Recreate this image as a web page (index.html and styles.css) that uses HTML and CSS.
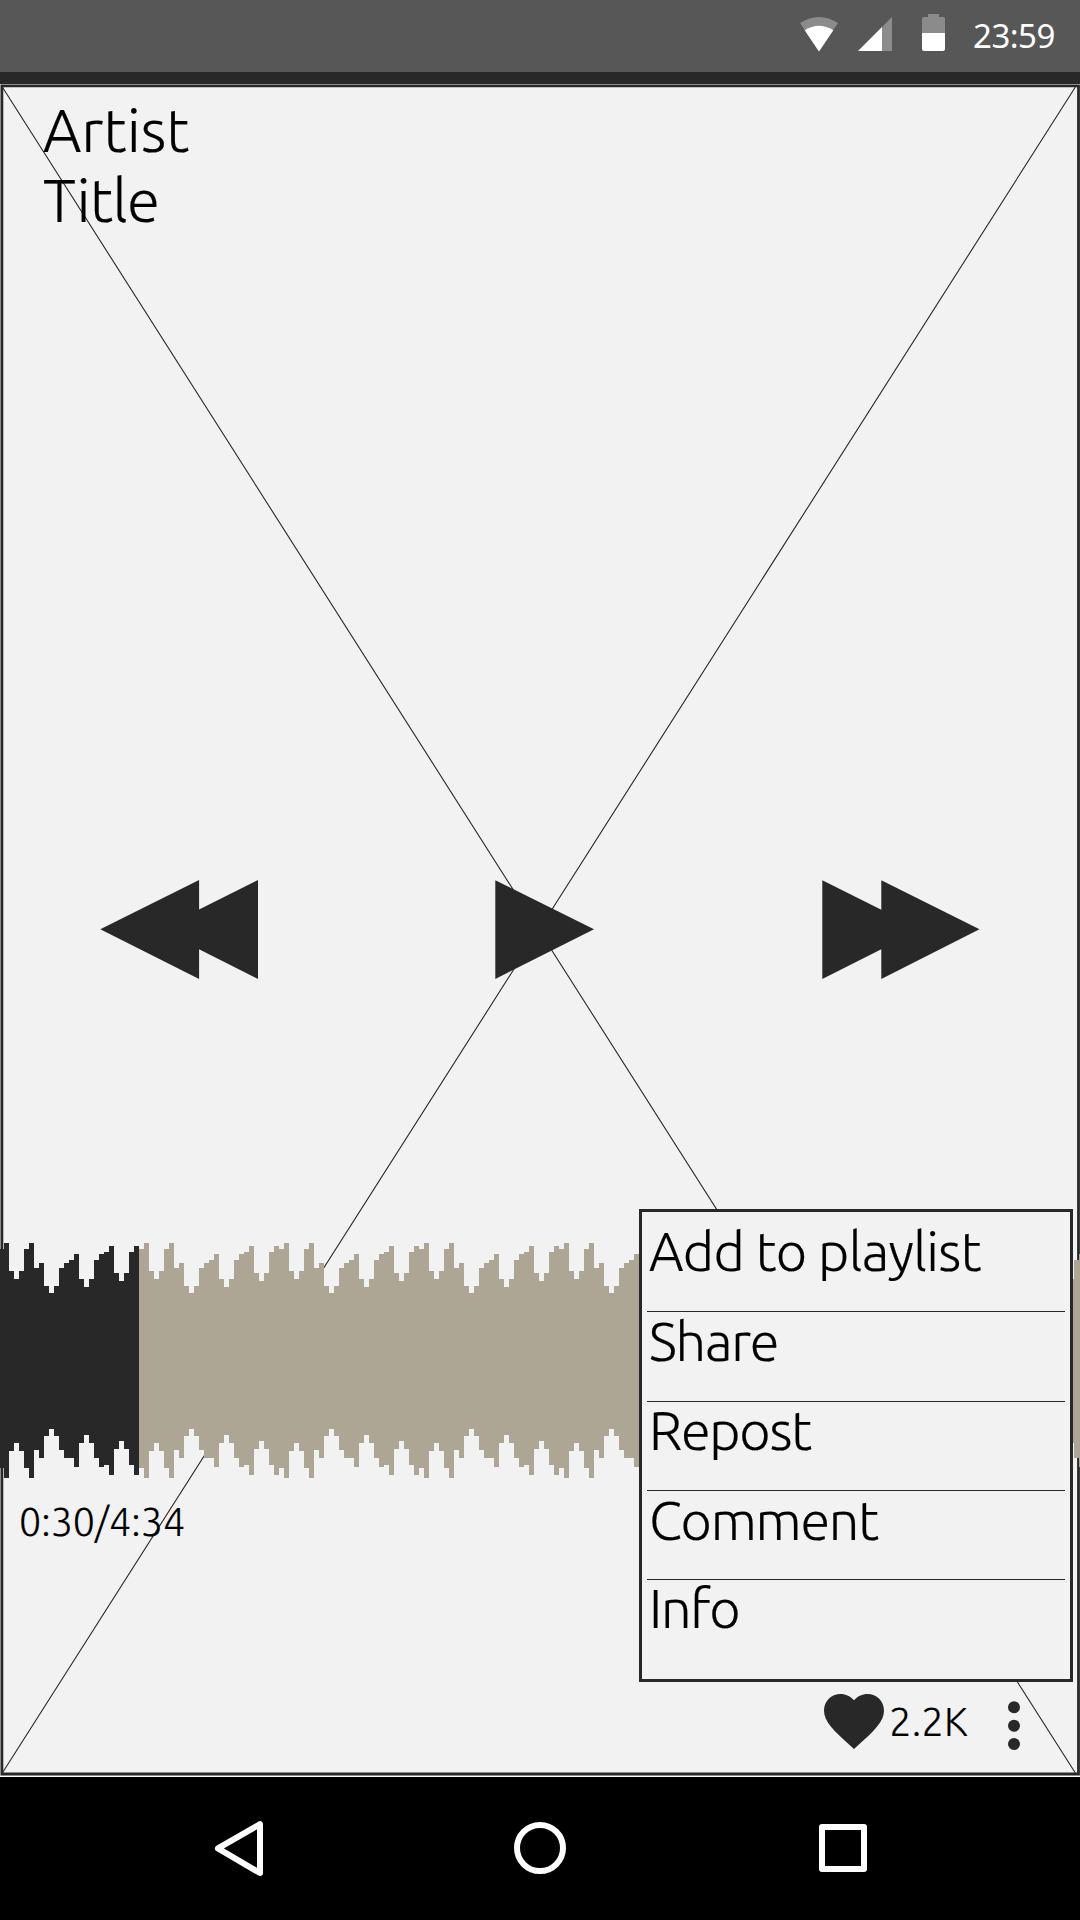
FILE: index.html
```html
<!DOCTYPE html>
<html lang="en">
<head>
<meta charset="utf-8">
<title>Player</title>
<link rel="stylesheet" href="styles.css">
</head>
<body>
<header class="status-bar">
  <svg class="status-icons" width="150" height="44" viewBox="798 12 150 44">
    <path class="dim" d="M819 51.5 800 23Q819 11 838 23Z"/>
    <path class="lit" d="M819 51.5 804.7 30.3Q819 21 833.3 30.3Z"/>
    <path class="dim" d="M892 17V51H882V27Z"/>
    <path class="lit" d="M858 51 882 27V51Z"/>
    <path class="dim" d="M922 33V19q0-2 2-2h4v-3h11v3h4q2 0 2 2V33Z"/>
    <path class="lit" d="M922 33H945V49q0 2-2 2H924q-2 0-2-2Z"/>
  </svg>
  <span class="clock">23:59</span>
</header>

<main class="player">
  <svg class="artwork" width="1080" height="1693" viewBox="0 84 1080 1693">
    <path class="frame" d="M1.9 85.9H1078.5V1774H1.9Z"/>
    <path class="diagonal" d="M2.3 87 1075.4 1773M1075.4 87 2.3 1773"/>
  </svg>

  <div class="track">
    <span class="track-line artist">Artist</span>
    <span class="track-line title">Title</span>
  </div>

  <div class="controls">
    <svg width="159" height="101" viewBox="100 879 159 101"><path d="M100.3 929.3 199.1 880V909.5L258 880V979L199.1 949.3V979Z"/></svg>
    <svg class="play" width="100" height="101" viewBox="495 879 100 101"><path d="M495.3 880.2 594 929.3 495.3 979Z"/></svg>
    <svg width="159" height="101" viewBox="822 879 159 101"><path d="M822.3 880.2 881.3 909.7V880.2L979.5 929.3 881.3 979V949.3L822.3 979Z"/></svg>
  </div>

  <svg class="waveform" width="1080" height="235" viewBox="0 0 1080 235">
    <defs>
      <path id="wave" d="M0 6h5V0h5V28h5V36h5V28h5V6h5V0h5V25h5V20h5V43h5V49.7h5V43h5V25h5V20h5V16.7h5V11h5V36.3h5V43.7h5V36.3h5V16.7h5V11h5V9h5V3h5V30.3h5V38h5V30.3h5V9h5V3h5V232h-5V222.3h-5V205.7h-5V198h-5V205.7h-5V232h-5V222.3h-5V223.7h-5V214.7h-5V199.7h-5V192.3h-5V199.7h-5V223.7h-5V214.7h-10V206.7h-5V192.7h-5V186h-5V192.7h-5V214.7h-5V206.7h-5V234.7h-5V225h-5V207.7h-5V200h-5V207.7h-5V234.7h-5V225h-5Z"/>
    </defs>
    <use class="played" href="#wave" x="-1"/>
    <g class="remaining">
      <use href="#wave" x="139"/><use href="#wave" x="279"/><use href="#wave" x="419"/><use href="#wave" x="559"/>
      <use href="#wave" x="699"/><use href="#wave" x="839"/><use href="#wave" x="979"/>
    </g>
  </svg>

  <div class="time">0:30/4:34</div>

  <div class="actions">
    <svg width="60" height="56" viewBox="2 3 20 18.67"><path d="M12 21.35l-1.45-1.32C5.4 15.36 2 12.28 2 8.5 2 5.42 4.42 3 7.5 3c1.74 0 3.41.81 4.5 2.09C13.09 3.81 14.76 3 16.5 3 19.58 3 22 5.42 22 8.5c0 3.78-3.4 6.86-8.55 11.54L12 21.35z"/></svg>
    <span class="likes">2.2K</span>
    <svg class="more" width="12" height="50" viewBox="0 0 12 50"><circle cx="6" cy="6.3" r="6"/><circle cx="6" cy="24.7" r="6"/><circle cx="6" cy="43.1" r="6"/></svg>
  </div>

  <ul class="menu">
    <li class="item first">Add to playlist</li>
    <li class="item second">Share</li>
    <li class="item third">Repost</li>
    <li class="item">Comment</li>
    <li class="item last">Info</li>
  </ul>
</main>

<nav class="nav-bar">
  <svg width="50" height="58" viewBox="214 1819 50 58"><path d="M260 1824.2V1873L217.9 1848.4Z"/></svg>
  <svg class="home" width="54" height="54" viewBox="513 1821 54 54"><circle cx="540" cy="1848" r="23"/></svg>
  <svg width="48" height="48" viewBox="819 1824 48 48"><rect x="822" y="1827" width="42" height="42"/></svg>
</nav>
</body>
</html>
```
FILE: styles.css
```css
* { box-sizing: border-box; }
body {
  margin: 0;
  width: 1080px;
  height: 1920px;
  display: flex;
  flex-direction: column;
  overflow: hidden;
  background: #fff;
  color: #000;
  font-family: "Ubuntu", "Noto Sans", sans-serif;
  font-weight: 300;
}
svg { display: block; flex: none; }

.status-bar {
  height: 84px;
  padding: 0 26px 12px 798px;
  display: flex;
  align-items: flex-start;
  background: linear-gradient(#575757 72px, #282828 72px);
}
.status-icons { margin-top: 12px; }
.dim { fill: #8b8b8b; }
.lit { fill: #fff; }
.clock {
  margin: 13px 0 0 25px;
  font-family: "Noto Sans", sans-serif;
  font-size: 33px;
  letter-spacing: -0.5px;
  line-height: 45px;
  font-weight: 400;
  color: #fff;
  white-space: nowrap;
}

.player {
  position: relative;
  height: 1692px;
  display: flex;
  flex-direction: column;
  background: #f2f2f2;
  -webkit-text-stroke: 0.2px #000;
}
.artwork { position: absolute; left: 0; top: 0; }
.frame { fill: none; stroke: #282828; stroke-width: 2.8; }
.diagonal { fill: none; stroke: #282828; stroke-width: 1.1; }

.track {
  position: relative;
  height: 795px;
  padding: 11px 0 0 43px;
  display: flex;
  flex-direction: column;
  align-items: flex-start;
  font-size: 60px;
  line-height: 70px;
}
.track-line { white-space: nowrap; }
.title { letter-spacing: -0.6px; }

.controls {
  position: relative;
  height: 364px;
  padding-left: 100px;
  display: flex;
  align-items: flex-start;
  fill: #282828;
}
.play { margin: 0 227px 0 236px; }
.waveform { position: relative; shape-rendering: crispEdges; }
.played { fill: #282828; }
.remaining { fill: #ada695; }

.time {
  position: relative;
  height: 216px;
  padding: 17px 0 0 19px;
  font-size: 39.4px;
  line-height: 52px;
}
.actions {
  position: relative;
  height: 56px;
  padding-left: 824px;
  display: flex;
  align-items: flex-start;
  fill: #282828;
}
.likes {
  width: 117px;
  margin-left: 5px;
  margin-top: 2px;
  font-size: 40px;
  letter-spacing: 0.1px;
  line-height: 52px;
}
.more { margin: 7px 0 0 2px; }

.menu {
  position: absolute;
  left: 639px;
  top: 1125px;
  width: 434px;
  height: 473px;
  margin: 0;
  padding: 10px 5px 0;
  list-style: none;
  background: #f2f2f2;
  border: 3px solid #282828;
  font-size: 54px;
  letter-spacing: -1.25px;
  line-height: 58px;
}
.item {
  height: 89px;
  padding-left: 2px;
  border-bottom: 1px solid #282828;
  white-space: nowrap;
}
.first { height: 90px; letter-spacing: -0.65px; }
.second { height: 90px; }
.third { line-height: 56px; }
.last { border-bottom: 0; line-height: 56px; }

.nav-bar {
  height: 143px;
  margin-top: 1px;
  padding: 0 0 1px 214px;
  display: flex;
  align-items: center;
  background: #000;
  fill: none;
  stroke: #fff;
  stroke-width: 6;
  stroke-linejoin: round;
}
.home { margin: 0 252px 0 249px; }
```
